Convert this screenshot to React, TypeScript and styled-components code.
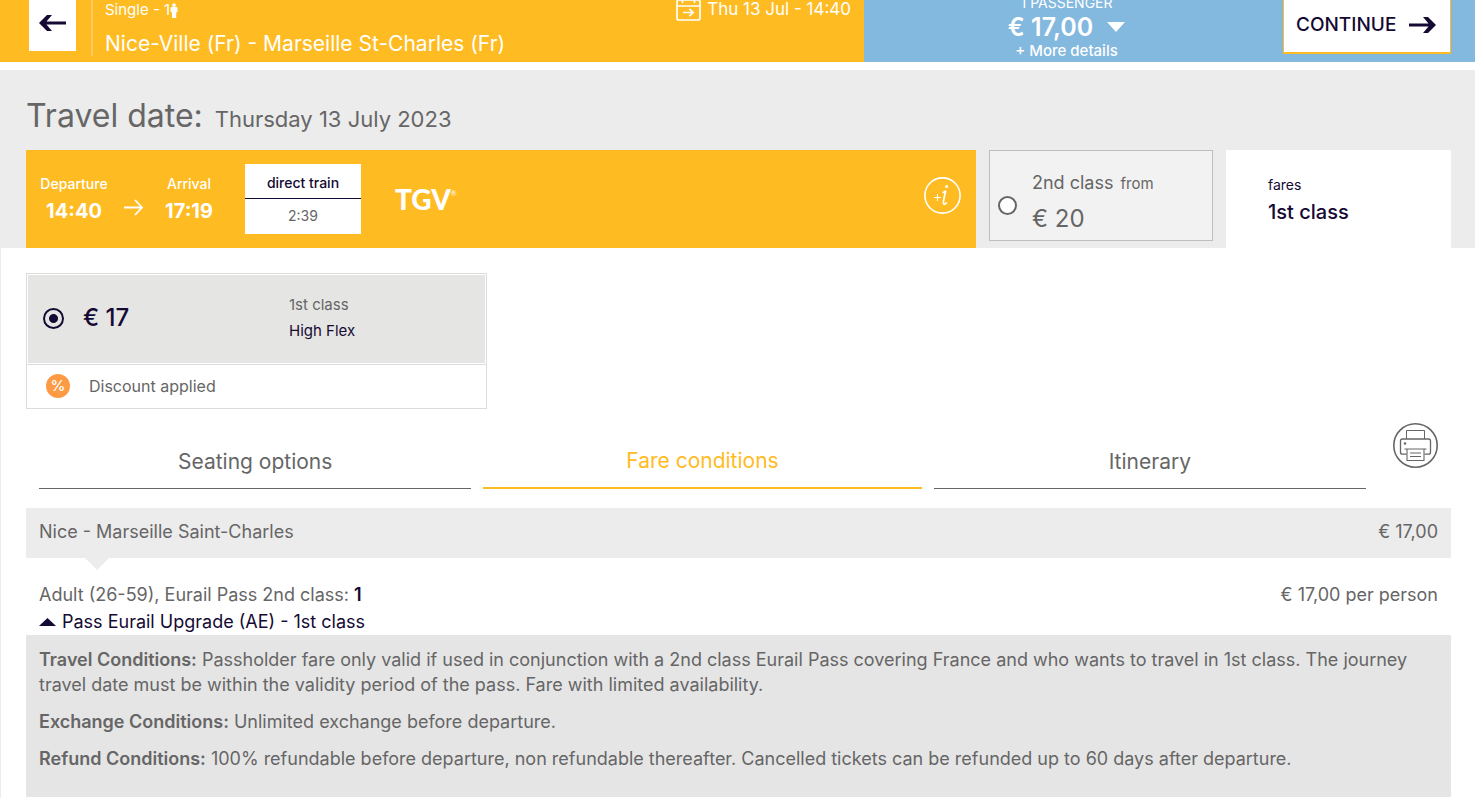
import React, { useState } from "react";
import styled, { createGlobalStyle } from "styled-components";

const amber = "#ffbb22";
const sky = "#83b8df";
const navy = "#150a33";
const grey = "#666666";

const GlobalStyle = createGlobalStyle`
  *, *::before, *::after { box-sizing: border-box; }
  body {
    margin: 0;
    background: #ffffff;
    color: ${grey};
    font-family: Inter, "Liberation Sans", sans-serif;
    font-size: 18px;
    line-height: 24px;
  }
  h1, h2, p { margin: 0; font-weight: 400; }
  button {
    margin: 0;
    padding: 0;
    border: 0;
    background: none;
    color: inherit;
    font: inherit;
    cursor: pointer;
  }
`;

const TopBar = styled.header`
  display: grid;
  grid-template-columns: 864fr 611fr;
  height: 62px;
  margin-bottom: 8px;
  overflow: hidden;
  color: #ffffff;
`;

const JourneySummary = styled.div`
  display: flex;
  align-items: flex-start;
  padding: 0 13px 0 29px;
  background: ${amber};
`;

const BackButton = styled.button`
  display: flex;
  align-items: center;
  justify-content: center;
  width: 47px;
  height: 51px;
  padding-bottom: 6px;
  background: #ffffff;
`;

const RouteBlock = styled.div`
  display: flex;
  flex: 1;
  flex-direction: column;
  gap: 10px;
  height: 56px;
  margin-left: 15px;
  padding-left: 12px;
  border-left: 2px solid #ffca57;
`;

const TripType = styled.div`
  display: flex;
  align-items: center;
  height: 20px;
  font-size: 15px;
  white-space: nowrap;
`;

const RouteName = styled.div`
  font-size: 21px;
  line-height: 28px;
  white-space: nowrap;
`;

const DepartureDate = styled.div`
  display: flex;
  align-items: center;
  gap: 6px;
  height: 18px;
  font-size: 17px;
  white-space: nowrap;
`;

const PriceBar = styled.div`
  display: flex;
  align-items: flex-start;
  padding-right: 24px;
  background: ${sky};
`;

const PriceSummary = styled.div`
  display: flex;
  flex: 1;
  flex-direction: column;
  align-items: center;
  justify-content: flex-end;
  height: 61px;
  padding-right: 14px;
`;

const PassengerCount = styled.div`
  font-size: 14px;
  line-height: 20px;
`;

const Total = styled.button`
  display: flex;
  align-items: center;
  gap: 14px;
  font-size: 25px;
  font-weight: 600;
  line-height: 28px;
`;

const MoreDetails = styled.button`
  font-size: 15px;
  font-weight: 500;
  line-height: 20px;
`;

const ContinueButton = styled.button`
  display: flex;
  align-items: center;
  justify-content: space-between;
  width: 168px;
  height: 54px;
  padding: 0 14px 2px 12px;
  border: 1px solid ${amber};
  border-width: 0 1px 2px;
  background: #ffffff;
  color: ${navy};
  font-size: 19px;
  font-weight: 500;
`;

const TravelSection = styled.section`
  padding: 26px 24px 0 26px;
  background: #ececec;
`;

const DateHeading = styled.h1`
  display: flex;
  align-items: baseline;
  gap: 12px;
  height: 54px;
  font-size: 32px;
  line-height: 40px;
`;

const DateValue = styled.span`
  font-size: 22px;
`;

const TrainRow = styled.div`
  display: grid;
  grid-template-columns: 950fr 224fr 225fr;
  align-items: start;
  gap: 13px;
`;

const TrainCard = styled.div`
  display: flex;
  height: 98px;
  padding: 14px 15px 14px 13px;
  background: ${amber};
  color: #ffffff;
`;

const Stop = styled.div`
  width: 70px;
  padding-top: 10px;
  text-align: center;
`;

const StopLabel = styled.div`
  font-size: 14px;
  font-weight: 500;
  line-height: 20px;
`;

const StopTime = styled.div`
  font-size: 20px;
  font-weight: 700;
  line-height: 34px;
`;

const StopArrow = styled.div`
  display: flex;
  width: 45px;
  padding-top: 35px;
  padding-left: 15px;
`;

const Duration = styled.div`
  width: 116px;
  margin-left: 21px;
  background: #ffffff;
  color: ${grey};
  font-size: 14px;
  line-height: 34px;
  text-align: center;
`;

const DirectLabel = styled.div`
  height: 35px;
  padding-top: 2px;
  border-bottom: 1px solid ${navy};
  color: ${navy};
  font-weight: 500;
`;

const Brand = styled.div`
  display: flex;
  flex: 1;
  align-items: flex-start;
  padding: 23px 0 0 34px;
  font-family: Lato, sans-serif;
  font-size: 28px;
  font-weight: 900;
  line-height: 24px;
`;

const BrandMark = styled.span`
  font-size: 7px;
  font-weight: 400;
  line-height: 12px;
`;

const InfoButton = styled.button`
  display: flex;
  height: 37px;
  margin-top: 13px;
`;

const ClassOption = styled.label`
  display: flex;
  align-items: center;
  gap: 15px;
  height: 91px;
  padding: 12px 8px 0;
  border: 1px solid #bdbdbd;
  background: #f2f2f2;
`;

const Radio = styled.input`
  flex: none;
  width: 19px;
  height: 19px;
  margin: 8px 0 0;
  appearance: none;
  border: 2px solid ${grey};
  border-radius: 50%;
  background: #ffffff;
`;

const ClassName = styled.div`
  line-height: 34px;
  white-space: nowrap;
`;

const FromText = styled.span`
  margin-left: 7px;
  font-size: 15px;
`;

const ClassPrice = styled.div`
  font-size: 24px;
  line-height: 36px;
`;

const SelectedClass = styled.div`
  height: 98px;
  padding: 23px 42px 0;
  background: #ffffff;
  color: ${navy};
  font-size: 14px;
`;

const SelectedName = styled.div`
  font-size: 20px;
  font-weight: 500;
  line-height: 30px;
`;

const Content = styled.main`
  padding: 25px 24px 1px 25px;
  border-left: 1px solid #ececec;
`;

const FareCard = styled.div`
  width: 461px;
  max-width: 100%;
  border: 1px solid #dcdcdc;
`;

const FareChoice = styled.label`
  display: grid;
  grid-template-columns: 22px 188px 1fr;
  align-items: center;
  column-gap: 18px;
  height: 90px;
  padding: 0 0 2px 15px;
  border: 1px solid #ffffff;
  background: #e5e5e3;
  color: ${navy};
`;

const FareRadio = styled.input`
  width: 21px;
  height: 21px;
  margin: 0;
  appearance: none;
  border: 2px solid ${navy};
  border-radius: 50%;
  background: radial-gradient(circle, ${navy} 4px, transparent 5px);
`;

const FarePrice = styled.span`
  font-size: 24px;
  font-weight: 500;
`;

const FareName = styled.span`
  font-size: 15px;
  line-height: 26px;
`;

const Muted = styled.span`
  display: block;
  color: ${grey};
`;

const Discount = styled.div`
  display: flex;
  align-items: center;
  gap: 19px;
  height: 44px;
  padding: 0 19px 2px;
  border-top: 1px solid #dcdcdc;
  font-size: 16px;
`;

const PercentBadge = styled.span`
  width: 24px;
  height: 24px;
  border-radius: 50%;
  background: #fd9b44;
  color: #ffffff;
  font-size: 15px;
  font-weight: 500;
  text-align: center;
`;

const TabRow = styled.div`
  display: flex;
  align-items: flex-start;
  gap: 27px;
  margin: 14px 13px 19px;
`;

const TabList = styled.div`
  display: grid;
  flex: 1;
  grid-template-columns: 432fr 438fr 432fr;
  gap: 12px;
`;

const Tab = styled.button<{ $active: boolean }>`
  height: 66px;
  padding-top: ${(p) => (p.$active ? "11px" : "12px")};
  border-bottom: ${(p) => (p.$active ? `2px solid ${amber}` : `1px solid ${grey}`)};
  color: ${(p) => (p.$active ? amber : grey)};
  font-size: 21px;
`;

const PrintButton = styled.button`
  display: flex;
`;

const LegBand = styled.div`
  position: relative;
  display: flex;
  align-items: center;
  justify-content: space-between;
  height: 50px;
  padding: 0 13px 2px;
  background: #ececec;

  &::after {
    content: "";
    position: absolute;
    top: 100%;
    left: 59px;
    border: 12px solid transparent;
    border-top-color: #ececec;
    border-bottom-width: 0;
  }
`;

const PassengerRow = styled.div`
  display: flex;
  justify-content: space-between;
  padding: 25px 13px 0;
`;

const Count = styled.strong`
  color: ${navy};
  font-weight: 600;
`;

const FareToggle = styled.button`
  display: flex;
  align-items: center;
  gap: 6px;
  height: 28px;
  padding: 2px 0 0 13px;
  color: ${navy};
`;

const Conditions = styled.div`
  display: flex;
  flex-direction: column;
  gap: 12px;
  padding: 12px 13px 26px;
  background: #e5e5e5;
  line-height: 25px;
`;

const Term = styled.strong`
  font-weight: 600;
`;

const tabs = ["Seating options", "Fare conditions", "Itinerary"];

const conditions = [
  {
    term: "Travel Conditions:",
    text: "Passholder fare only valid if used in conjunction with a 2nd class Eurail Pass covering France and who wants to travel in 1st class. The journey travel date must be within the validity period of the pass. Fare with limited availability.",
  },
  { term: "Exchange Conditions:", text: "Unlimited exchange before departure." },
  {
    term: "Refund Conditions:",
    text: "100% refundable before departure, non refundable thereafter. Cancelled tickets can be refunded up to 60 days after departure.",
  },
];

const PersonIcon = () => (
  <svg width="8" height="15" viewBox="0 0 8 15" fill="#fff" aria-hidden="true">
    <circle cx="4" cy="2" r="1.8" />
    <path d="M2 3.700h4q1.500 0 1.500 1.500V9L6.200 9.500V15H2V9.500L.6 9V5.200Q.6 3.700 2 3.700z" />
  </svg>
);

const CalendarIcon = () => (
  <svg width="25" height="23" viewBox="0 0 25 23" fill="none" stroke="#fff" strokeWidth="1.7" aria-hidden="true">
    <rect x="1" y="2" width="23" height="20" rx="2" />
    <path d="M1 8h23M6.5 0v5M18.5 0v5M7 14.5h10M13.3 10.8l3.9 3.7-3.9 3.7" />
  </svg>
);

const PrinterIcon = () => (
  <svg width="45" height="45" viewBox="0 0 45 45" fill="none" stroke={grey} strokeWidth="1.3" aria-hidden="true">
    <circle cx="22.5" cy="22.5" r="21.7" strokeWidth="1.6" />
    <path d="M13.5 16V7.5h18V16" strokeWidth="1" />
    <path d="M13.5 31.2H9.5q-2 0-2-2V18q0-2 2-2h26q2 0 2 2v11.2q0 2-2 2h-4" />
    <path d="M11.5 26h22M14 26v11.5h17V26M17 30h11M17 33.5h11" strokeWidth="1.1" />
    <circle cx="12" cy="20.5" r="1.2" fill={grey} stroke="none" />
  </svg>
);

const InfoIcon = () => (
  <svg width="37" height="37" viewBox="0 0 37 37" fill="none" stroke="#fff" aria-hidden="true">
    <circle cx="18.5" cy="18.5" r="17.6" strokeWidth="1.6" />
    <path d="M10 20.5h7M13.5 17v7" strokeWidth="1" />
    <path d="M18.5 15.6q2.6-.4 3.3-2.1-1.4 5.5-2.2 10.2-.7 4.5 1.3 3.3 1-.5 2-1.5" strokeWidth="1.7" />
    <circle cx="22.6" cy="9.6" r="1.5" fill="#fff" stroke="none" />
  </svg>
);

export default function App() {
  const [active, setActive] = useState("Fare conditions");

  return (
    <>
      <GlobalStyle />
      <TopBar>
        <JourneySummary>
          <BackButton type="button" aria-label="Back">
            <svg width="27" height="16" viewBox="0 0 27 16" fill={navy} aria-hidden="true">
              <path d="M0 8L8 0h5L7.500 6.500H27v3H7.500L13 16H8z" />
            </svg>
          </BackButton>
          <RouteBlock>
            <TripType>
              Single - 1
              <PersonIcon />
            </TripType>
            <RouteName>Nice-Ville (Fr) - Marseille St-Charles (Fr)</RouteName>
          </RouteBlock>
          <DepartureDate>
            <CalendarIcon />
            Thu 13 Jul - 14:40
          </DepartureDate>
        </JourneySummary>
        <PriceBar>
          <PriceSummary>
            <PassengerCount>1 PASSENGER</PassengerCount>
            <Total type="button">
              € 17,00
              <svg width="18" height="10" viewBox="0 0 18 10" fill="#fff" aria-hidden="true">
                <path d="M0 0h18l-9 10z" />
              </svg>
            </Total>
            <MoreDetails type="button">+ More details</MoreDetails>
          </PriceSummary>
          <ContinueButton type="button">
            CONTINUE
            <svg width="27" height="16" viewBox="0 0 27 16" fill={navy} aria-hidden="true">
              <path d="M27 8L19 0h-5l5.500 6.500H0v3h19.500L14 16h5z" />
            </svg>
          </ContinueButton>
        </PriceBar>
      </TopBar>

      <TravelSection>
        <DateHeading>
          Travel date: <DateValue>Thursday 13 July 2023</DateValue>
        </DateHeading>
        <TrainRow>
          <TrainCard>
            <Stop>
              <StopLabel>Departure</StopLabel>
              <StopTime>14:40</StopTime>
            </Stop>
            <StopArrow>
              <svg width="19" height="17" viewBox="0 0 19 17" fill="none" stroke="#fff" strokeWidth="1.8" aria-hidden="true">
                <path d="M0 8.500h18M11 1l7 7.500-7 7.500" />
              </svg>
            </StopArrow>
            <Stop>
              <StopLabel>Arrival</StopLabel>
              <StopTime>17:19</StopTime>
            </Stop>
            <Duration>
              <DirectLabel>direct train</DirectLabel>
              2:39
            </Duration>
            <Brand>
              TGV<BrandMark>®</BrandMark>
            </Brand>
            <InfoButton type="button" aria-label="Train information">
              <InfoIcon />
            </InfoButton>
          </TrainCard>
          <ClassOption>
            <Radio type="radio" name="travel-class" />
            <div>
              <ClassName>
                2nd class<FromText>from</FromText>
              </ClassName>
              <ClassPrice>€ 20</ClassPrice>
            </div>
          </ClassOption>
          <SelectedClass>
            fares
            <SelectedName>1st class</SelectedName>
          </SelectedClass>
        </TrainRow>
      </TravelSection>

      <Content>
        <FareCard>
          <FareChoice>
            <FareRadio type="radio" name="fare" defaultChecked />
            <FarePrice>€ 17</FarePrice>
            <FareName>
              <Muted>1st class</Muted>
              High Flex
            </FareName>
          </FareChoice>
          <Discount>
            <PercentBadge>%</PercentBadge>
            Discount applied
          </Discount>
        </FareCard>

        <TabRow>
          <TabList role="tablist">
            {tabs.map((name) => (
              <Tab
                key={name}
                type="button"
                role="tab"
                aria-selected={name === active}
                $active={name === active}
                onClick={() => setActive(name)}
              >
                {name}
              </Tab>
            ))}
          </TabList>
          <PrintButton type="button" aria-label="Print">
            <PrinterIcon />
          </PrintButton>
        </TabRow>

        <LegBand>
          <span>Nice - Marseille Saint-Charles</span>
          <span>€ 17,00</span>
        </LegBand>
        <PassengerRow>
          <span>
            Adult (26-59), Eurail Pass 2nd class: <Count>1</Count>
          </span>
          <span>€ 17,00 per person</span>
        </PassengerRow>
        <FareToggle type="button" aria-expanded="true">
          <svg width="17" height="8" viewBox="0 0 17 8" fill={navy} aria-hidden="true">
            <path d="M8.500 0L17 8H0z" />
          </svg>
          Pass Eurail Upgrade (AE) - 1st class
        </FareToggle>
        <Conditions>
          {conditions.map(({ term, text }) => (
            <p key={term}>
              <Term>{term}</Term> {text}
            </p>
          ))}
        </Conditions>
      </Content>
    </>
  );
}
